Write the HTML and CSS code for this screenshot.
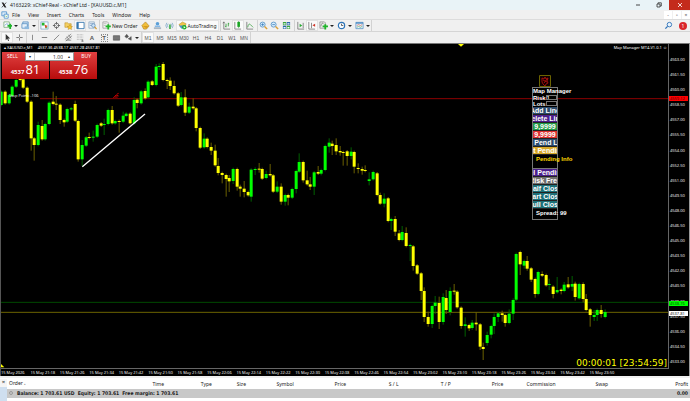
FILE: index.html
```html
<!DOCTYPE html>
<html lang="en">
<head>
  <meta charset="utf-8">
  <title>4163229: xChief-Real - xChief Ltd - [XAUUSD.c,M1]</title>
  <link rel="stylesheet" href="styles.css">
</head>
<body>
  <svg class="sprite" aria-hidden="true">
    <symbol id="i-newchart" viewBox="0 0 10 10"><path d="M1 1h6v6H1z" fill="#fff" stroke="#6aa06a" stroke-width=".8"/><path d="M2 5l2-2 2 1" stroke="#3a7ac0" fill="none" stroke-width=".7"/><path d="M5 4.500h2V3h2v1.500h1v2H9V9H7V6.500H5z" fill="#1fb52a"/></symbol>
    <symbol id="i-profiles" viewBox="0 0 10 10"><path d="M2 1h6v5H2z" fill="#cfe2f4" stroke="#4a86bd" stroke-width=".8"/><path d="M1 3h6v5H1z" fill="#e6f1fb" stroke="#4a86bd" stroke-width=".8"/><path d="M4 6h5v3H4z" fill="#8db9df"/></symbol>
    <symbol id="i-market" viewBox="0 0 10 10"><path d="M1 1h8v8H1z" fill="#f7fbff" stroke="#6b9cc6" stroke-width=".7"/><path d="M2 2h3v3H2zM6 7h2v1H6z" fill="#24b52e"/><path d="M5 4l3.500 1.500L6 8z" fill="#dd4a2c"/></symbol>
    <symbol id="i-target" viewBox="0 0 10 10"><circle cx="5" cy="5" r="2.600" fill="none" stroke="#666" stroke-width=".9"/><path d="M5 1v3M5 6v3M1 5h3M6 5h3" stroke="#555" stroke-width=".9"/></symbol>
    <symbol id="i-folder" viewBox="0 0 10 10"><path d="M1 2h3l1 1h3v4H1z" fill="#f3cf62" stroke="#bb8c24" stroke-width=".6"/><path d="M6.500 4l1 2 2 .2-1.500 1.300.5 2-2-1-2 1 .5-2L3.500 6.200l2-.2z" fill="#f8c632" stroke="#a97c15" stroke-width=".4"/></symbol>
    <symbol id="i-terminal" viewBox="0 0 10 10"><path d="M1 1.500h8v7H1z" fill="#fff" stroke="#3576ad" stroke-width="1"/><path d="M1 1.500h2v7H1z" fill="#3576ad"/></symbol>
    <symbol id="i-tester" viewBox="0 0 10 10"><path d="M1 1h6v7H1z" fill="#eaf1f8" stroke="#7899b8" stroke-width=".7"/><path d="M2 3h4M2 5h3" stroke="#678db5" stroke-width=".7"/><circle cx="6" cy="5" r="2" fill="#cfe6fa" stroke="#4a7eae" stroke-width=".7"/><path d="M7.500 6.500L9.500 9" stroke="#d49a2a" stroke-width="1.300"/></symbol>
    <symbol id="i-order" viewBox="0 0 10 10"><path d="M1 1h5l1 1v6H1z" fill="#f4f4f4" stroke="#888" stroke-width=".7"/><path d="M2 3h3M2 5h2" stroke="#999" stroke-width=".6"/><path d="M4 5h2V3.500h2V5h1.800v2H8v2.500H6V7H4z" fill="#1fb52a"/></symbol>
    <symbol id="i-gold" viewBox="0 0 10 10"><path d="M1 5l4-4 4 4.500L6 9H3z" fill="#f1bf3b" stroke="#b07d16" stroke-width=".7"/><path d="M2 5.500h6L6 8z" fill="#d79a1f"/></symbol>
    <symbol id="i-user" viewBox="0 0 10 10"><circle cx="5" cy="3" r="2" fill="#5a9fd8"/><path d="M2 5h6v2H2z" fill="#86b9e6"/><path d="M1 7h8v2H1z" fill="#a9b8c5"/></symbol>
    <symbol id="i-signal" viewBox="0 0 10 10"><path d="M2 2a5 5 0 0 0 0 6M8 2a5 5 0 0 1 0 6M3.500 3a3 3 0 0 0 0 4M6.500 3a3 3 0 0 1 0 4" fill="none" stroke="#7fa9cb" stroke-width=".9"/><path d="M4.500 4h2v5h-2z" fill="#51b457"/></symbol>
    <symbol id="i-auto" viewBox="0 0 10 10"><path d="M1 4l4-3 4 2-1 3-5 1z" fill="#efc44a" stroke="#a67f1d" stroke-width=".5"/><path d="M1 5h7v2L4 8.500z" fill="#4b90cd"/><circle cx="7" cy="7" r="2.500" fill="#1fae2b"/><path d="M6.300 5.700L8.500 7 6.300 8.300z" fill="#fff"/></symbol>
    <symbol id="i-bars" viewBox="0 0 10 10"><path d="M2 1v8h7M1 2.500l1-1.500 1 1.500" fill="none" stroke="#666" stroke-width=".8"/><path d="M4.500 3v4M7 2v4M3.500 6h1M7 3h1" stroke="#2c9a34" stroke-width=".9"/></symbol>
    <symbol id="i-candles" viewBox="0 0 10 10"><path d="M2 1v8h7" fill="none" stroke="#666" stroke-width=".8"/><path d="M4.800 1h3v5.500h-3z" fill="#1fb52a"/><path d="M6.300 0v8" stroke="#1d7f25" stroke-width=".6"/></symbol>
    <symbol id="i-line" viewBox="0 0 10 10"><path d="M2 1v8h7" fill="none" stroke="#666" stroke-width=".8"/><path d="M3 7q1-5 3-3t3 3" fill="none" stroke="#2c9a34" stroke-width=".8"/></symbol>
    <symbol id="i-zoomin" viewBox="0 0 10 10"><circle cx="4" cy="4" r="2.800" fill="#d6ebfb" stroke="#3d82bd" stroke-width=".8"/><path d="M2.500 4h3M4 2.500v3" stroke="#2f78b8" stroke-width=".8"/><path d="M6.200 6.200L9 9" stroke="#dca037" stroke-width="1.600"/></symbol>
    <symbol id="i-zoomout" viewBox="0 0 10 10"><circle cx="4" cy="4" r="2.800" fill="#d6ebfb" stroke="#3d82bd" stroke-width=".8"/><path d="M2.500 4h3" stroke="#2f78b8" stroke-width=".8"/><path d="M6.200 6.200L9 9" stroke="#dca037" stroke-width="1.600"/></symbol>
    <symbol id="i-tile" viewBox="0 0 10 10"><path d="M1 1h3.700v3.700H1zM5.300 5.300H9V9H5.300z" fill="#38a63a"/><path d="M5.300 1H9v3.700H5.300zM1 5.300h3.700V9H1z" fill="#2c69a8"/><path d="M1.700 2.500h2.300v1.500H1.700zM6 2.500h2.300v1.500H6zM1.700 6.800h2.300v1.500H1.700zM6 6.800h2.300v1.500H6z" fill="#eef6ff"/></symbol>
    <symbol id="i-scroll" viewBox="0 0 10 10"><path d="M2 1v8h7M8 2v6" fill="none" stroke="#666" stroke-width=".8"/><path d="M4 3l3 2-3 2z" fill="#2bab35"/></symbol>
    <symbol id="i-shift" viewBox="0 0 10 10"><path d="M2 1v8h7M5 2v6" fill="none" stroke="#666" stroke-width=".8"/><path d="M9 3L6 4.700 9 6.500z" fill="#cf3529"/></symbol>
    <symbol id="i-indic" viewBox="0 0 10 10"><path d="M1 1h5l1 1v6H1z" fill="#eee" stroke="#777" stroke-width=".7"/><path d="M2 6q1-5 3-3" stroke="#555" fill="none" stroke-width=".7"/><path d="M4 5h2V3.500h2V5h2v2H8v2.500H6V7H4z" fill="#1fb52a"/></symbol>
    <symbol id="i-clock" viewBox="0 0 10 10"><circle cx="5" cy="5" r="3.500" fill="#f7fbff" stroke="#2d74b8" stroke-width="1.300"/><path d="M5 3v2h2" fill="none" stroke="#333" stroke-width=".8"/></symbol>
    <symbol id="i-template" viewBox="0 0 10 10"><path d="M1 1.500h8v7H1z" fill="#e9f3fc" stroke="#4d8cc3" stroke-width=".8"/><path d="M1 1.500h8v1.500H1z" fill="#4d8cc3"/><path d="M2 5l2-1 2 1 2-1" fill="none" stroke="#d0553f" stroke-width=".7"/><path d="M2 7l2-1 2 1 2-1" fill="none" stroke="#48a050" stroke-width=".7"/></symbol>
    <symbol id="i-cursor" viewBox="0 0 10 10"><path d="M3 1v7l1.700-1.500 1 2.500 1-.5-1-2.300H8z" fill="#333"/></symbol>
    <symbol id="i-cross" viewBox="0 0 10 10"><path d="M5 1.500v3M5 5.500v3M1.500 5h3M5.500 5h3" stroke="#555" stroke-width=".8"/></symbol>
    <symbol id="i-vline" viewBox="0 0 10 10"><path d="M5 2v6" stroke="#777" stroke-width=".9"/></symbol>
    <symbol id="i-hline" viewBox="0 0 10 10"><path d="M2 5h6" stroke="#666" stroke-width=".9"/></symbol>
    <symbol id="i-trend" viewBox="0 0 10 10"><path d="M2 8l6-6" stroke="#666" stroke-width=".8"/></symbol>
    <symbol id="i-channel" viewBox="0 0 10 10"><path d="M1 7l7-6M2 9l7-6M3 4l3 4M5 2l3 4M2 8h6" stroke="#666" stroke-width=".7"/></symbol>
    <symbol id="i-fib" viewBox="0 0 10 10"><path d="M1 2h7M1 4.500h7M1 7h7" stroke="#777" stroke-width=".6" stroke-dasharray="1 .6"/><path d="M7 7v2.500M6 9h2.500" stroke="#555" stroke-width=".7"/></symbol>
    <symbol id="i-arrows" viewBox="0 0 10 10"><path d="M1 4l2-2.500 2 2.500-2 1.500zM5 6.500L8 4v4zM4 5l2 2" fill="#555" stroke="#555" stroke-width=".6"/></symbol>
    <symbol id="i-frame" viewBox="0 0 10 10"><path d="M1.500 3h7v5h-7z" fill="#777" stroke="#555" stroke-width=".7"/></symbol>
    <symbol id="i-search" viewBox="0 0 10 10"><circle cx="6" cy="4" r="2.500" fill="#e8f3fd" stroke="#2f72b8" stroke-width="1"/><path d="M4 6L1.500 8.500" stroke="#2f72b8" stroke-width="1.400"/></symbol>
  </svg>

  <div class="terminal-app">
    <header class="titlebar">
      <svg class="logo" viewBox="0 0 10 10"><path d="M1 1h3l5 8H6z" fill="#222"/><path d="M8.500 1L1.500 9" stroke="#222" stroke-width="1.300"/></svg>
      <span class="title">4163229: xChief-Real - xChief Ltd - [XAUUSD.c,M1]</span>
      <div class="win-buttons">
        <button aria-label="Minimize"><svg viewBox="0 0 10 10"><path d="M3 5h4" stroke="#333" stroke-width=".9"/></svg></button>
        <button aria-label="Restore"><svg viewBox="0 0 10 10"><path d="M3 4h3v3H3zM4 4V2.800h3.300V6H6" fill="none" stroke="#333" stroke-width=".8"/></svg></button>
        <button class="close" aria-label="Close"><svg viewBox="0 0 10 10"><path d="M3 3l4 4M7 3L3 7" stroke="#fff" stroke-width=".8"/></svg></button>
      </div>
    </header>

    <nav class="menubar">
      <svg class="logo" viewBox="0 0 10 10"><path d="M1 1h6v5H1z" fill="#dcebf8" stroke="#4b90cd"/><path d="M4 4h5v5H4z" fill="#fff" stroke="#4b90cd"/><path d="M5 7l1-1 1 1 1-1" fill="none" stroke="#38a63a" stroke-width=".7"/></svg>
      <button>File</button><button>View</button><button>Insert</button><button>Charts</button><button>Tools</button><button>Window</button><button>Help</button>
      <div class="mdi-buttons"><button aria-label="Minimize chart">-</button><button aria-label="Restore chart">▫</button><button aria-label="Close chart">×</button></div>
    </nav>

    <div class="toolbar main">
      <button class="tool drop" aria-label="New chart"><svg><use href="#i-newchart"/></svg></button>
      <button class="tool drop" aria-label="Profiles"><svg><use href="#i-profiles"/></svg></button>
      <button class="tool sep" aria-label="Market watch"><svg><use href="#i-market"/></svg></button>
      <button class="tool" aria-label="Data window"><svg><use href="#i-target"/></svg></button>
      <button class="tool" aria-label="Navigator"><svg><use href="#i-folder"/></svg></button>
      <button class="tool on" aria-label="Terminal"><svg><use href="#i-terminal"/></svg></button>
      <button class="tool" aria-label="Strategy tester"><svg><use href="#i-tester"/></svg></button>
      <button class="tool sep text"><svg><use href="#i-order"/></svg>New Order</button>
      <button class="tool" aria-label="MetaEditor"><svg><use href="#i-gold"/></svg></button>
      <button class="tool" aria-label="Community"><svg><use href="#i-user"/></svg></button>
      <button class="tool" aria-label="Signals"><svg><use href="#i-signal"/></svg></button>
      <button class="tool text on"><svg><use href="#i-auto"/></svg>AutoTrading</button>
      <button class="tool sep" aria-label="Bar chart"><svg><use href="#i-bars"/></svg></button>
      <button class="tool on" aria-label="Candlesticks"><svg><use href="#i-candles"/></svg></button>
      <button class="tool" aria-label="Line chart"><svg><use href="#i-line"/></svg></button>
      <button class="tool sep" aria-label="Zoom in"><svg><use href="#i-zoomin"/></svg></button>
      <button class="tool" aria-label="Zoom out"><svg><use href="#i-zoomout"/></svg></button>
      <button class="tool" aria-label="Tile windows"><svg><use href="#i-tile"/></svg></button>
      <button class="tool sep" aria-label="Auto scroll"><svg><use href="#i-scroll"/></svg></button>
      <button class="tool on" aria-label="Chart shift"><svg><use href="#i-shift"/></svg></button>
      <button class="tool drop" aria-label="Indicators"><svg><use href="#i-indic"/></svg></button>
      <button class="tool drop" aria-label="Periods"><svg><use href="#i-clock"/></svg></button>
      <button class="tool drop end" aria-label="Templates"><svg><use href="#i-template"/></svg></button>
      <div class="toolbar-right">
        <button class="tool" aria-label="Search"><svg><use href="#i-search"/></svg></button>
        <button class="tool chat" aria-label="Notifications"><span class="badge">1</span></button>
      </div>
    </div>

    <div class="toolbar lines">
      <button class="tool on" aria-label="Cursor"><svg><use href="#i-cursor"/></svg></button>
      <button class="tool" aria-label="Crosshair"><svg><use href="#i-cross"/></svg></button>
      <button class="tool sep" aria-label="Vertical line"><svg><use href="#i-vline"/></svg></button>
      <button class="tool" aria-label="Horizontal line"><svg><use href="#i-hline"/></svg></button>
      <button class="tool" aria-label="Trendline"><svg><use href="#i-trend"/></svg></button>
      <button class="tool" aria-label="Channel"><svg><use href="#i-channel"/></svg></button>
      <button class="tool" aria-label="Fibonacci"><svg><use href="#i-fib"/></svg></button>
      <button class="tool letter">A</button>
      <button class="tool letter boxed"><span>T</span></button>
      <button class="tool" aria-label="Rectangle"><svg><use href="#i-frame"/></svg></button>
      <button class="tool drop" aria-label="Arrows"><svg><use href="#i-arrows"/></svg></button>
      <div class="periods">
        <button class="tool on">M1</button><button class="tool">M5</button><button class="tool">M15</button><button class="tool">M30</button><button class="tool">H1</button><button class="tool">H4</button><button class="tool">D1</button><button class="tool">W1</button><button class="tool">MN</button>
      </div>
    </div>

    <main class="chart">
      <div class="plot">
        <svg class="candles" id="candles" viewBox="3 0 2001 972" preserveAspectRatio="none">
          <path d="M120 164H2004" stroke="#8c0000" stroke-width="3"/>
          <path d="M3 775H2004" stroke="#004a00" stroke-width="3"/>
          <path d="M3 805H2004" stroke="#6b6300" stroke-width="3"/>
          <path d="M1374 0h18l-9 8z" fill="#ff0"/>
          <path d="M3 960l10 10H3z" fill="#ff0"/>
          <path d="M340 162l8-9 8 3M344 159h9M350 151l6-3" fill="none" stroke="#c00000" stroke-width="3"/>
        </svg>

        <div class="symbol-line"><span>▴ XAUUSD.c,M1</span><span>4537.36 4538.17 4537.28 4537.81</span></div>
        <div class="stop-text">Stop Point: -106</div>
        <div class="expert-name">Map Manager MT4-V1.0.1 ☺</div>
        <div class="timer">00:00:01 [23:54:59]</div>

        <div class="one-click">
          <button class="deal"><span class="side">SELL</span><span class="price"><b>4537</b><i>81</i></span></button>
          <button class="deal buy"><span class="side">BUY</span><span class="price"><b>4538</b><i>76</i></span></button>
          <div class="volume"><button aria-label="Less">▾</button><input type="text" value="1.00" aria-label="Volume"><button aria-label="More">▴</button></div>
        </div>

        <div class="manager">
          <svg class="lion" viewBox="0 0 12 12"><path d="M.5.500h11v11H.5z" fill="#100" stroke="#6b6300"/><path d="M3 3l2 1 1-2 1 2 2-1-1 3 1 2-2 1-1 2-2-2-1-2zM4 5l4 2M8 4L5 8" fill="none" stroke="#c01010" stroke-width=".8"/></svg>
          <div class="manager-box">
            <div class="label head">Map Manager</div>
            <div class="label field">Risk<input type="text" value="1" aria-label="Risk"></div>
            <div class="label field">Lots<input type="text" value="" aria-label="Lots"></div>
            <button class="navy"><span>Add Line</span></button>
            <button class="purple"><span>Delete Line</span></button>
            <button class="green"><span>9,9999</span></button>
            <button class="red"><span>9,9999</span></button>
            <button class="navy"><span>l Pend Li</span></button>
            <button class="gold"><span>st Pendin</span></button>
            <div class="label info">Pending Info</div>
            <button class="purple"><span>el Pendin</span></button>
            <button class="grey"><span>Risk Free</span></button>
            <button class="teal"><span>Half Close</span></button>
            <button class="teal"><span>Part Close</span></button>
            <button class="teal"><span>Full Close</span></button>
            <div class="label spread">Spread: 99</div>
          </div>
        </div>
      </div>

      <div class="price-axis" id="price-axis">
        <span class="tag stop">4559.12</span>
        <span class="tag ask">4538.76</span>
        <span class="tag bid">4537.81</span>
      </div>
      <div class="time-axis" id="time-axis"></div>
    </main>

    <section class="terminal">
      <div class="side-strip"><button aria-label="Close terminal">×</button></div>
      <table>
        <thead>
          <tr><th class="order">Order <small>▴</small></th><th class="time">Time</th><th class="type">Type</th><th class="size">Size</th><th class="symbol">Symbol</th><th>Price</th><th>S / L</th><th>T / P</th><th>Price</th><th>Commission</th><th>Swap</th><th class="profit">Profit</th></tr>
        </thead>
        <tbody>
          <tr><td colspan="11"><span class="dot"></span>Balance: 1 703.61 USD&nbsp; Equity: 1 703.61&nbsp; Free margin: 1 703.61</td><td class="profit">0.00</td></tr>
        </tbody>
      </table>
    </section>
  </div>
  <script src="chart.js"></script>
</body>
</html>
```
FILE: styles.css
```css
* {
  box-sizing: border-box;
}

body {
  margin: 0;
  background: #f0f0f0;
  font-family: "Noto Sans", "Open Sans", sans-serif;
  font-size: 5px;
  color: #222;
}

button, input {
  font: inherit;
  color: inherit;
  border: 0;
  margin: 0;
  padding: 0;
  background: none;
}

.sprite {
  display: none;
}

.terminal-app {
  display: flex;
  flex-direction: column;
  min-height: 100vh;
}

/* window chrome */
.titlebar {
  display: flex;
  align-items: center;
  height: 10px;
  background: #e9f3f7;
}

.logo {
  width: 6px;
  height: 6px;
  margin: 0 3px 0 1px;
}

.titlebar .title {
  flex: 1;
}

.win-buttons {
  display: flex;
  height: 10px;
}

.win-buttons button {
  width: 21px;
  height: 10px;
}

.win-buttons svg {
  display: block;
  width: 10px;
  height: 10px;
  margin: 0 auto;
}

.win-buttons .close {
  background: #c42b1c;
}

.menubar {
  display: flex;
  align-items: center;
  gap: 8px;
  height: 10px;
  background: #f0f0f0;
  border-bottom: 1px solid #dcdcdc;
}

.menubar .logo {
  width: 8px;
  height: 8px;
  margin: 0 -5px 0 1px;
}

.mdi-buttons {
  display: flex;
  gap: 1px;
  margin-left: auto;
}

.mdi-buttons button {
  width: 8px;
  height: 8px;
  line-height: 8px;
  background: #fff;
  color: #555;
}

/* toolbars */
.toolbar {
  display: flex;
  align-items: center;
  height: 12px;
  padding-left: 1px;
  background: #f0f0f0;
  border-bottom: 1px solid #d5d5d5;
}

.tool {
  display: flex;
  align-items: center;
  justify-content: center;
  flex: none;
  width: 12px;
  height: 11px;
}

.tool svg {
  width: 9px;
  height: 9px;
  flex: none;
}

.tool.on {
  background: #fafafa;
  box-shadow: inset 0 0 0 1px #e2e2e2;
}

.tool.sep {
  margin-left: 1px;
  border-left: 1px solid #d2d2d2;
}

.tool.drop {
  width: 18px;
  gap: 2px;
}

.tool.drop::after {
  content: "";
  border: 2px solid transparent;
  border-top-color: #222;
  border-bottom: 0;
}

.tool.text {
  width: auto;
  gap: 1px;
  padding: 0 2px;
}

.tool.end {
  border-right: 1px solid #d2d2d2;
}

.toolbar-right {
  display: flex;
  gap: 1px;
  margin-left: auto;
  padding-right: 3px;
}

.chat {
  justify-content: flex-end;
}

.badge {
  width: 8px;
  height: 8px;
  border-radius: 50%;
  background: #d9252a;
  color: #fff;
  line-height: 8px;
  text-align: center;
}

.toolbar.lines {
  height: 11px;
  border-bottom: 0;
}

.letter {
  font-family: "Liberation Sans", sans-serif;
  font-size: 6px;
  font-weight: bold;
  color: #555;
}

.boxed span {
  width: 7px;
  line-height: 6px;
  border: 1px dotted #888;
}

.periods {
  display: flex;
  margin-left: 1px;
  border-left: 1px solid #d2d2d2;
  border-right: 1px solid #d2d2d2;
  font-family: "Liberation Sans", sans-serif;
  color: #555;
}

/* chart window */
.chart {
  display: grid;
  grid-template-columns: 1fr 20px;
  grid-template-rows: 1fr 8px;
  height: 333px;
  background: #000;
  border-left: 1px solid #555;
  border-right: 1px solid #999;
  border-top: 1px solid #777;
  color: #fff;
  font-family: "Open Sans", sans-serif;
  font-size: 4px;
}

.plot {
  position: relative;
  border-right: 1px solid #666;
  border-bottom: 1px solid #666;
}

.candles {
  display: block;
  width: 100%;
  height: 324px;
}

.up {
  fill: #00ff00;
}

.down {
  fill: #ffff00;
}

.wick-up {
  stroke: #006000;
  stroke-width: 3px;
}

.wick-down {
  stroke: #6b6000;
  stroke-width: 3px;
}

.symbol-line {
  position: absolute;
  top: 1px;
  left: 3px;
  display: flex;
  gap: 5px;
  font-family: "Noto Sans", sans-serif;
  line-height: 6px;
}

.stop-text {
  position: absolute;
  top: 48px;
  left: 8px;
  line-height: 7px;
}

.expert-name {
  position: absolute;
  top: 1px;
  right: 1px;
  font-family: "Noto Sans", sans-serif;
  line-height: 6px;
}

.timer {
  position: absolute;
  right: 1px;
  bottom: 0;
  font-family: "DejaVu Sans", sans-serif;
  font-size: 9px;
  line-height: 10px;
  color: #ff0;
}

/* one click trading */
.one-click {
  position: absolute;
  top: 8px;
  left: 1px;
  display: grid;
  grid-template-columns: 47px 47px;
  gap: 1px;
}

.deal {
  display: flex;
  flex-direction: column;
  justify-content: space-between;
  height: 27px;
  background: linear-gradient(#e04040, #b80c0c);
  color: #fff;
}

.side {
  align-self: flex-start;
  padding-left: 5px;
  font-size: 5px;
  line-height: 9px;
}

.buy .side {
  align-self: flex-end;
  padding: 0 6px 0 0;
}

.price {
  display: flex;
  align-items: baseline;
  justify-content: center;
  gap: 1px;
  width: 100%;
  line-height: 17px;
}

.price b {
  font-size: 6px;
}

.price i {
  font-style: normal;
  font-size: 13px;
}

.volume {
  position: absolute;
  top: 0;
  left: 23px;
  display: flex;
  width: 49px;
  height: 9px;
  background: #fff;
  border: 1px solid #999;
  color: #222;
}

.volume button {
  width: 8px;
  line-height: 7px;
}

.volume input {
  flex: 1;
  min-width: 0;
  font-size: 5px;
  text-align: right;
  padding-right: 2px;
  border-left: 1px solid #ccc;
}

/* map manager panel */
.manager {
  position: absolute;
  top: 31px;
  right: 110px;
  width: 26px;
  font-family: "Liberation Sans", sans-serif;
  font-size: 7px;
  font-weight: bold;
}

.lion {
  display: block;
  width: 12px;
  height: 12px;
  margin: 0 auto;
}

.manager-box {
  display: flex;
  flex-direction: column;
  height: 133px;
  border: 1px solid #777;
}

.label {
  font-size: 6px;
  line-height: 6px;
  white-space: nowrap;
}

.manager .head {
  line-height: 7px;
}

.manager .field {
  display: flex;
}

.manager .field input {
  flex: 1;
  min-width: 0;
  height: 5px;
  font-size: 5px;
  border: 1px solid #777;
  background: #000;
}

.manager button {
  display: flex;
  justify-content: center;
  height: 8px;
  line-height: 7px;
  overflow: hidden;
  white-space: nowrap;
  border-bottom: 1px solid #222;
}

.manager .info {
  height: 14px;
  padding-left: 3px;
  line-height: 9px;
  color: #ffd700;
  border-bottom: 1px solid #777;
}

.manager .spread {
  padding-left: 3px;
  line-height: 9px;
}

.navy { background: #2c4a6b; }
.purple { background: #4b1f8c; }
.green { background: #239a48; }
.red { background: #dd2f2f; }
.gold { background: #d8a828; }
.grey { background: #707070; }
.teal { background: #1c7078; }

/* axes */
.price-axis {
  position: relative;
  display: flex;
  flex-direction: column;
  justify-content: space-between;
  padding: 13px 0 4px 1px;
  line-height: 6px;
}

.tag {
  position: absolute;
  left: 0;
  right: 1px;
  padding-left: 1px;
  line-height: 5px;
}

.tag.stop {
  top: 16%;
  background: #f00;
  color: #400;
}

.tag.ask {
  top: 79%;
  background: #0f0;
  color: #040;
}

.tag.bid {
  top: 82%;
  background: #fff;
  color: #000;
}

.time-axis {
  grid-column: 1 / 3;
  display: grid;
  grid-template-columns: repeat(21, 1fr);
  padding-right: 70px;
  line-height: 7px;
  white-space: nowrap;
}

/* terminal */
.terminal {
  display: flex;
  flex: 1;
  margin-top: 2px;
  padding-top: 1px;
  background: #fff;
}

.side-strip {
  flex: none;
  width: 7px;
  background: linear-gradient(#f5f5f5 8px, #cfdff0 8px);
  text-align: center;
}

.side-strip button {
  display: block;
  width: 100%;
  font-size: 6px;
  line-height: 6px;
}

.terminal table {
  width: 100%;
  align-self: flex-start;
  table-layout: fixed;
  border-collapse: collapse;
  line-height: 9px;
}

.terminal th {
  padding: 0;
  font-weight: normal;
  text-align: right;
}

.terminal .order {
  width: 10%;
  padding-left: 2px;
  text-align: left;
}

.order small {
  font-size: 3px;
  color: #999;
}

.terminal .time { width: 13%; }
.terminal .type { width: 7%; }
.terminal .size { width: 5%; }
.terminal .symbol { width: 7%; }

.terminal .profit {
  width: 12%;
  padding-right: 2px;
  text-align: right;
}

.terminal td {
  padding: 0 0 0 2px;
  background: #c8c8c8;
  font-family: "DejaVu Sans Condensed", "Noto Sans", sans-serif;
  font-weight: bold;
}

.dot {
  display: inline-block;
  width: 4px;
  height: 4px;
  margin-right: 4px;
  border: 1px solid #999;
  border-radius: 50%;
}
```
FILE: chart.js
```javascript
const NS = 'http://www.w3.org/2000/svg';
const STEP = 11.04;
const LAST_X = 1814;

// each bar: direction, body top, body bottom, high, low ("-" = short default wick)
const segments = [
  [48, `u 95 135|d 95 130|u 105 130|u 80 108|u 60 80|d 50 60|d 58 83|d 83 125|d 125 235 - 272|d 235 255 - 302|u 195 255 185|d 198 238 180 242|u 192 238|u 128 192|d 125 132 95|d 131 134 108 150|d 134 180 - 192|d 180 187 - 200|u 147 185|u 145 148|d 132 182 122|d 183 298 - 305|u 255 298 240 318|u 232 257|d 231 234 218|u 230 232 212 245|u 195 230|d 190 197|u 192 195 176 225|u 150 192|d 150 190 138|u 183 190|d 183 186 - 218|u 167 185 155|u 161 168|d 161 190|u 120 190 112|d 119 129 - 145|u 94 130|d 93 115 85|u 65 112|d 64 75 - 78|u 20 75 12|u 18 21 10 30|d 12 60 6|d 60 63 - 87|d 62 78 52 90|d 78 100 62|d 100 137|u 112 135 96|d 112 158 88 168|u 140 158 128|d 140 145 115|d 145 204 - 214|d 204 263|u 236 262 220|d 236 261|d 261 272 248 285|d 272 316 254|d 318 339 294 346|d 339 345 - 370|d 345 357 - 410|d 354 364 345 396|u 327 363 - 372|d 327 380 - 392|d 380 386 374 410|d 386 396 363 412|d 396 406|u 329 410 - 425|u 327 330 322 345|d 326 329 309 338|d 327 356|u 342 354 332|d 342 346 312|d 346 395|u 380 395 364|d 380 425 370 434|u 405 425 - 437|d 405 413 - 436|u 387 413|u 333 387 - 400|u 306 335 280|d 306 361 - 368|d 361 373 332|d 373 380 351 390|u 337 380 - 405|d 336 341 318|u 330 341 - 346|u 258 330|u 248 260 235 278|d 251 258 242 285|d 255 274 235 285`],
  [228, `d 93 97 78 107|d 96 98 - 137|d 94 108 - 137|u 95 108 82 118|d 96 140 - 160|d 144 147 130 160|d 147 152 140 164|d 150 153 136|u 178 183 157 196|u 156 178|d 160 225|d 225 251 218|u 236 251 220 262|d 235 303|u 297 303 - 330|d 297 335 288 348|d 340 360 330|u 336 360 318|d 339 378 322|u 375 378 - 423|d 379 438 - 452|d 436 461|d 460 513 - 540|d 513 591 502 606|d 591 612 575 620|u 558 612 - 624|u 548 558 528 582|d 549 606 530 627|u 531 606 520 614|d 534 570 510 582|u 513 576 502 586|d 512 515 492 524|d 515 562 - 566`],
  [558, `d 233 288 - 296|u 283 288 262 320|d 285 295 - 303|u 278 294 270 300|d 278 283 246 302|d 283 350 - 360|d 351 357 338 390|u 315 339 305 347|u 288 314 - 325|u 261 288 250 312|u 250 261 - 276|d 250 255 242 275|d 255 279 - 290|u 251 279 238|u 210 251 205 270|u 72 209|d 66 103 - 135|u 93 107 - 116|d 93 116 78 122|d 115 149 - 156|d 147 192 - 203|u 126 192|d 132 137 124|d 135 166|u 162 165 146 180|d 170 192 - 205|u 180 187 141|d 179 183 - 193|u 164 183 156|d 163 172 141|u 162 170 138 183|d 161 201 155 212|u 162 205|d 162 207 157 217|d 207 240 192|d 238 255 - 290|u 255 261 240 273|u 240 255 - 273|d 240 252 225 263|u 246 261 238`]
];

const svg = document.getElementById('candles');

function add(tag, attrs) {
  const el = document.createElementNS(NS, tag);
  for (const key in attrs) el.setAttribute(key, attrs[key]);
  svg.appendChild(el);
}

const bars = [];
segments.forEach(([base, text]) => {
  text.split('|').forEach(row => {
    const [dir, top, bottom, high, low] = row.split(' ');
    const t = +top + base;
    const b = +bottom + base;
    bars.push({
      dir, t, b,
      h: high && high !== '-' ? +high + base : t - 4,
      l: low ? +low + base : b + 4
    });
  });
});

bars.forEach((bar, i) => {
  const x = Math.round((LAST_X - (bars.length - 1 - i) * STEP) / 3) * 3;
  const name = bar.dir === 'u' ? 'up' : 'down';
  add('line', { x1: x + 0.5, x2: x + 0.5, y1: bar.h, y2: bar.l, class: 'wick-' + name });
  add('rect', { x: x - 4, y: bar.t, width: 9, height: Math.max(bar.b - bar.t, 3), class: name });
});

add('line', { x1: 247, y1: 368, x2: 435, y2: 210, stroke: '#fff', 'stroke-width': 4 });

const priceAxis = document.getElementById('price-axis');
for (let i = 0; i <= 20; i++) {
  const label = document.createElement('span');
  label.textContent = (4563 - i * 1.5).toFixed(2);
  priceAxis.appendChild(label);
}

const timeAxis = document.getElementById('time-axis');
for (let i = 0; i <= 20; i++) {
  const minutes = 21 * 60 + 10 + i * 8;
  const label = document.createElement('span');
  const clock = Math.floor(minutes / 60) + ':' + String(minutes % 60).padStart(2, '0');
  label.textContent = i === 0 ? '15 May 2026' : '15 May ' + clock;
  timeAxis.appendChild(label);
}
```
